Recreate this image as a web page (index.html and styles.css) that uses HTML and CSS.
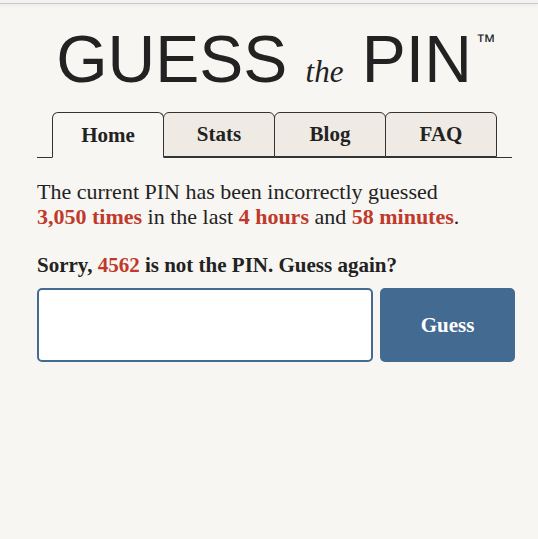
FILE: index.html
```html
<!DOCTYPE html>
<html lang="en">
<head>
    <meta charset="UTF-8">
    <meta name="viewport" content="width=device-width, initial-scale=1.0">
    <title>Guess the PIN</title>
    <link rel="stylesheet" href="styles.css">
</head>
<body>
    <div class="topbar"></div>

    <div class="page">
        <h1 class="logo">GUESS <span class="the">the</span> PIN<sup class="tm">™</sup></h1>

        <nav class="tabs">
            <a class="tab active" href="#">Home</a>
            <a class="tab" href="#">Stats</a>
            <a class="tab" href="#">Blog</a>
            <a class="tab" href="#">FAQ</a>
        </nav>

        <p class="summary">
            The current PIN has been incorrectly guessed<br>
            <b class="hl">3,050 times</b> in the last <b class="hl">4 hours</b> and <b class="hl">58 minutes</b>.
        </p>

        <p class="sorry">Sorry, <span class="hl">4562</span> is not the PIN. Guess again?</p>

        <form class="guess-form" onsubmit="return false">
            <input type="text" class="guess-input" autofocus>
            <button type="submit" class="guess-btn">Guess</button>
        </form>
    </div>
</body>
</html>
```

FILE: styles.css
```css
body {
    margin: 0;
    background-color: #f7f6f2;
    font-family: "Liberation Serif", "DejaVu Serif", serif;
    color: #222;
}
.topbar {
    height: 3px;
    background-color: #f3f3f3;
    border-bottom: 1px solid #c8c8c8;
    box-shadow: 0 2px 3px #ececec;
}
.page {
    padding: 0 23px 0 37px;
}
.logo {
    margin: 22px 0 0;
    text-align: center;
    font-family: "Liberation Sans", Arial, sans-serif;
    font-weight: normal;
    font-size: 66px;
    line-height: 66px;
    color: #222;
}
.the {
    font-family: "Liberation Serif", "Times New Roman", serif;
    font-style: italic;
    font-size: 31px;
    line-height: 1;
}
.tm {
    font-size: 20px;
    line-height: 0;
    vertical-align: baseline;
    position: relative;
    top: -1.7em;
    margin-left: 4px;
}
.tabs {
    display: flex;
    margin: 20px 3px 0 0;
    padding-left: 15px;
    border-bottom: 1px solid #333;
}
.tab {
    width: 112px;
    height: 45px;
    box-sizing: border-box;
    margin-bottom: -1px;
    margin-left: -1px;
    border: 1px solid #333;
    border-radius: 6px 6px 0 0;
    background-color: #efebe4;
    display: flex;
    align-items: center;
    justify-content: center;
    color: #222;
    text-decoration: none;
    font-weight: bold;
    font-size: 21px;
}
.tab.active {
    margin-left: 0;
    height: 46px;
    background-color: #f7f6f2;
    border-bottom-color: #f7f6f2;
}
.summary {
    margin: 21px 0 0;
    font-size: 22px;
    line-height: 25px;
}
.hl {
    color: #c0392b;
    font-weight: bold;
}
.sorry {
    margin: 24px 0 0;
    font-size: 21px;
    font-weight: bold;
}
.guess-form {
    display: flex;
    gap: 7px;
    margin-top: 10px;
}
.guess-input {
    flex: 1;
    width: 0;
    min-width: 0;
    height: 74px;
    box-sizing: border-box;
    border: 2px solid #436a91;
    border-radius: 5px;
    background-color: #fff;
    padding: 0 10px;
    font-size: 40px;
    outline: none;
}
.guess-btn {
    width: 135px;
    height: 74px;
    border: none;
    border-radius: 5px;
    background-color: #436a91;
    color: #fff;
    font-family: "Liberation Serif", serif;
    font-weight: bold;
    font-size: 21px;
}
```
